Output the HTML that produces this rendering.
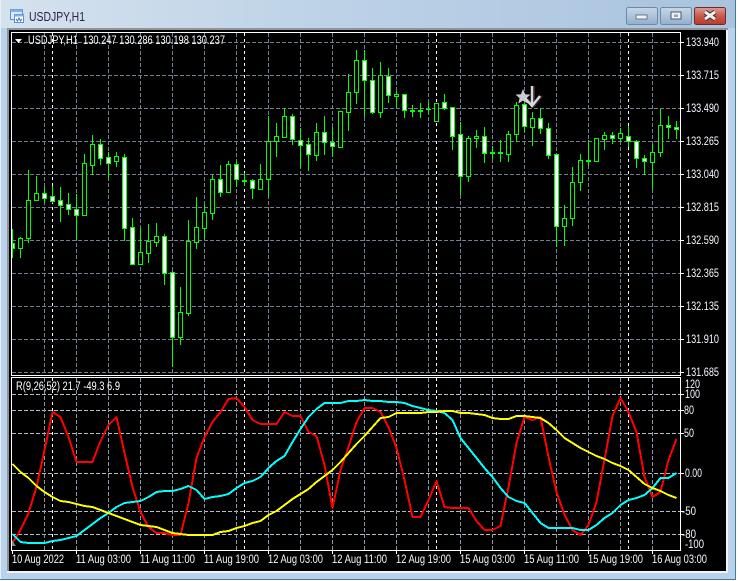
<!DOCTYPE html>
<html><head><meta charset="utf-8"><title>USDJPY,H1</title>
<style>
html,body{margin:0;padding:0;background:#fff;width:738px;height:581px;overflow:hidden}
svg{display:block}
text{font-family:"Liberation Sans",sans-serif}
</style></head><body>
<svg width="738" height="581" viewBox="0 0 738 581" xmlns="http://www.w3.org/2000/svg">
<defs>
<linearGradient id="tb" x1="0" y1="0" x2="1" y2="0"><stop offset="0" stop-color="#d5e2ee"/><stop offset=".45" stop-color="#bdd2e7"/><stop offset="1" stop-color="#a9c3de"/></linearGradient>
<linearGradient id="btn" x1="0" y1="0" x2="0" y2="1"><stop offset="0" stop-color="#c6d7e8"/><stop offset=".5" stop-color="#aec4da"/><stop offset="1" stop-color="#92aecb"/></linearGradient>
<linearGradient id="cl" x1="0" y1="0" x2="0" y2="1"><stop offset="0" stop-color="#d9a094"/><stop offset=".5" stop-color="#c65b4c"/><stop offset="1" stop-color="#b83a2c"/></linearGradient>
</defs>
<!-- window frame -->
<rect x="0" y="0" width="736" height="580" fill="#b9d1ea"/>
<rect x="0" y="0" width="736" height="28" fill="url(#tb)"/>
<rect x="0" y="0" width="1" height="580" fill="#e6eef6"/>
<path d="M735.5 0V579.5H0" fill="none" stroke="#3f7f8f" stroke-width="1"/>
<rect x="7" y="28" width="721" height="2" fill="#8e9499"/>
<rect x="7" y="28" width="2" height="544" fill="#8e9499"/>
<rect x="726" y="30" width="2" height="543" fill="#f2f5f8"/>
<rect x="7" y="571" width="721" height="2" fill="#f2f5f8"/>
<rect x="9" y="30" width="717" height="541" fill="#000"/>
<!-- title icon -->
<rect x="10.5" y="9.5" width="12" height="10" fill="#dceafa" stroke="#5d8fd0"/>
<rect x="10.5" y="9.5" width="12" height="2.5" fill="#7fb0ea"/>
<rect x="14.5" y="14.5" width="9" height="8" fill="#fff" stroke="#5d8fd0"/>
<rect x="14.5" y="14.5" width="9" height="2" fill="#7fb0ea"/>
<path d="M16 19l1.5 2 1.5-3 1.5 3 1.5-2" fill="none" stroke="#3b6fbd" stroke-width="1"/>
<text x="29" y="21" font-size="13" fill="#2d2245" textLength="56" lengthAdjust="spacingAndGlyphs">USDJPY,H1</text>
<!-- window buttons -->
<rect x="626.5" y="7.5" width="31" height="17" rx="2" fill="url(#btn)" stroke="#6f88a3"/>
<rect x="636" y="15" width="11" height="4" fill="#eef2f6" stroke="#55606c" stroke-width=".8"/>
<rect x="660.5" y="7.5" width="31" height="17" rx="2" fill="url(#btn)" stroke="#6f88a3"/>
<rect x="671" y="12" width="10" height="7" fill="#eef2f6" stroke="#4f5a66" stroke-width="1"/>
<rect x="674" y="14.5" width="4" height="2.5" fill="#8ea5bd"/>
<rect x="694.5" y="7.5" width="31" height="17" rx="2" fill="url(#cl)" stroke="#6d2a2a"/>
<path d="M705 12l10 7M715 12l-10 7" stroke="#3c2a2a" stroke-width="5" fill="none"/>
<path d="M705 12l10 7M715 12l-10 7" stroke="#eef0f2" stroke-width="3" fill="none"/>
<!-- grid -->
<g shape-rendering="crispEdges" fill="none" stroke-width="1">
<path stroke="#708090" stroke-dasharray="4 2" d="M12 42.5H680M12 75.5H680M12 108.5H680M12 141.5H680M12 174.5H680M12 207.5H680M12 240.5H680M12 273.5H680M12 306.5H680M12 339.5H680M12 372.5H680"/>
<path stroke="#b4bcc6" stroke-dasharray="4 2" d="M12 394.5H680M12 410.5H680M12 433.5H680M12 473.5H680M12 511.5H680M12 534.5H680"/>
<path stroke="#708090" stroke-dasharray="4 2" d="M44.5 33V375M76.5 33V375M108.5 33V375M140.5 33V375M172.5 33V375M204.5 33V375M236.5 33V375M268.5 33V375M300.5 33V375M332.5 33V375M364.5 33V375M396.5 33V375M428.5 33V375M460.5 33V375M492.5 33V375M524.5 33V375M556.5 33V375M588.5 33V375M620.5 33V375M652.5 33V375"/>
<path stroke="#8a97a6" stroke-dasharray="4 2" d="M44.5 378V550M76.5 378V550M108.5 378V550M140.5 378V550M172.5 378V550M204.5 378V550M236.5 378V550M268.5 378V550M300.5 378V550M332.5 378V550M364.5 378V550M396.5 378V550M428.5 378V550M460.5 378V550M492.5 378V550M524.5 378V550M556.5 378V550M588.5 378V550M620.5 378V550M652.5 378V550"/>
<path stroke="#fff" stroke-dasharray="3 3" d="M52.5 33V375M244.5 33V375M436.5 33V375M628.5 33V375M52.5 378V550M244.5 378V550M436.5 378V550M628.5 378V550"/>
</g>
<!-- candles -->
<g shape-rendering="crispEdges" stroke="#00ff00" stroke-width="1">
<path fill="none" d="M12.5 229V258M20.5 237V258M28.5 170V243M36.5 176V200M44.5 187V203M52.5 186V203M60.5 187V222M68.5 193V215M76.5 194V240M84.5 154V216M92.5 135V175M100.5 139V165M108.5 152V179M116.5 152V167M124.5 154V241M132.5 218V265M140.5 228V264M148.5 224V263M156.5 223V247M164.5 234V285M172.5 271V367M180.5 287V345M188.5 220V316M196.5 197V249M204.5 205V239M212.5 175V220M220.5 165V197M228.5 161V192M236.5 161V187M244.5 173V186M252.5 179V199M260.5 164V189M268.5 116V197M276.5 123V157M284.5 108V138M292.5 114V145M300.5 128V168M308.5 138V171M316.5 123V161M324.5 116V155M332.5 127V157M340.5 111V148M348.5 74V131M356.5 50V104M364.5 50V117M372.5 68V114M380.5 62V118M388.5 68V103M396.5 91V108M404.5 94V118M412.5 105V117M420.5 103V118M428.5 102V114M436.5 103V121M444.5 94V110M452.5 107V150M460.5 122V195M468.5 136V182M476.5 130V148M484.5 127V163M492.5 146V159M500.5 140V162M508.5 131V162M516.5 102V142M524.5 103V132M532.5 112V146M540.5 108V134M548.5 123V159M556.5 154V247M564.5 205V246M572.5 167V226M580.5 154V191M588.5 140V166M596.5 138V162M604.5 132V150M612.5 132V144M620.5 128V142M628.5 126V147M636.5 140V168M644.5 155V175M652.5 144V190M660.5 109V157M668.5 116V139M676.5 121V139"/>
<path fill="#000" d="M18.5 238.5h4v10h-4zM26.5 200.5h4v38h-4zM34.5 193.5h4v7h-4zM82.5 163.5h4v52h-4zM90.5 144.5h4v21h-4zM114.5 156.5h4v5h-4zM138.5 252.5h4v12h-4zM146.5 241.5h4v12h-4zM154.5 236.5h4v6h-4zM178.5 312.5h4v25h-4zM186.5 241.5h4v72h-4zM194.5 227.5h4v15h-4zM202.5 212.5h4v16h-4zM210.5 179.5h4v34h-4zM226.5 164.5h4v28h-4zM258.5 179.5h4v10h-4zM266.5 141.5h4v38h-4zM274.5 136.5h4v5h-4zM282.5 116.5h4v21h-4zM314.5 132.5h4v23h-4zM338.5 111.5h4v36h-4zM346.5 92.5h4v20h-4zM354.5 60.5h4v32h-4zM378.5 75.5h4v37h-4zM394.5 94.5h4v2h-4zM434.5 103.5h4v18h-4zM466.5 138.5h4v38h-4zM474.5 136.5h4v2h-4zM506.5 134.5h4v20h-4zM514.5 105.5h4v29h-4zM530.5 118.5h4v9h-4zM562.5 218.5h4v8h-4zM570.5 182.5h4v36h-4zM578.5 160.5h4v22h-4zM594.5 138.5h4v23h-4zM602.5 135.5h4v4h-4zM618.5 133.5h4v5h-4zM650.5 152.5h4v10h-4zM658.5 125.5h4v27h-4z"/>
<path fill="#fff" d="M12.5 243.5h2v5h-2zM42.5 193.5h4v5h-4zM50.5 196.5h4v5h-4zM58.5 200.5h4v5h-4zM66.5 204.5h4v5h-4zM74.5 209.5h4v6h-4zM98.5 144.5h4v14h-4zM106.5 157.5h4v6h-4zM122.5 157.5h4v71h-4zM130.5 227.5h4v37h-4zM162.5 236.5h4v37h-4zM170.5 272.5h4v65h-4zM218.5 179.5h4v13h-4zM234.5 164.5h4v15h-4zM250.5 180.5h4v8h-4zM290.5 116.5h4v23h-4zM298.5 140.5h4v5h-4zM306.5 144.5h4v10h-4zM322.5 132.5h4v10h-4zM330.5 142.5h4v4h-4zM362.5 60.5h4v20h-4zM370.5 80.5h4v32h-4zM386.5 76.5h4v19h-4zM402.5 94.5h4v16h-4zM442.5 102.5h4v6h-4zM450.5 107.5h4v29h-4zM458.5 134.5h4v42h-4zM482.5 136.5h4v17h-4zM522.5 104.5h4v22h-4zM538.5 118.5h4v10h-4zM546.5 128.5h4v27h-4zM554.5 154.5h4v72h-4zM610.5 135.5h4v3h-4zM626.5 136.5h4v5h-4zM634.5 141.5h4v17h-4zM642.5 158.5h4v3h-4zM666.5 125.5h4v2h-4zM674.5 127.5h4v2h-4z"/>
<path fill="#00ff00" stroke="none" d="M242 180h5v2h-5zM410 110h5v2h-5zM418 110h5v2h-5zM426 109h5v1h-5zM490 152h5v2h-5zM498 152h5v2h-5zM586 160h5v2h-5z"/>
</g>
<!-- frame lines -->
<g shape-rendering="crispEdges" fill="none" stroke="#fff" stroke-width="1">
<path d="M11.5 32.5H680.5V375.5H11.5Z"/>
<path d="M11.5 377.5H680.5V550.5H11.5Z"/>
<path d="M681 42.5h3M681 75.5h3M681 108.5h3M681 141.5h3M681 174.5h3M681 207.5h3M681 240.5h3M681 273.5h3M681 306.5h3M681 339.5h3M681 372.5h3M681 394.5h3M681 410.5h3M681 433.5h3M681 473.5h3M681 511.5h3M681 534.5h3"/>
<path d="M12.5 551v3M76.5 551v3M140.5 551v3M204.5 551v3M268.5 551v3M332.5 551v3M396.5 551v3M460.5 551v3M524.5 551v3M588.5 551v3M652.5 551v3"/>
</g>
<!-- indicator lines -->
<g fill="none" stroke-width="2" stroke-linejoin="round" shape-rendering="crispEdges">
<polyline stroke="#ff0000" points="12.5,543 20.5,530 28.5,513 36.5,487 44.5,450 52.5,412 60.5,417 68.5,437 76.5,462 84.5,462 92.5,462 100.5,441 108.5,425 116.5,417 124.5,453 132.5,487 140.5,512 148.5,527 156.5,533 164.5,533 172.5,535 180.5,535 188.5,503 196.5,458 204.5,437 212.5,422 220.5,412 228.5,399 236.5,398 244.5,407 252.5,420 260.5,424 268.5,424 276.5,424 284.5,412 292.5,416 300.5,416 308.5,432 316.5,436 324.5,465 332.5,508 340.5,470 348.5,447 356.5,422 364.5,408 372.5,408 380.5,412 388.5,427 396.5,448 404.5,480 412.5,517 420.5,517 428.5,500 436.5,481 444.5,507 452.5,508 460.5,508 468.5,508 476.5,521 484.5,530 492.5,530 500.5,526 508.5,487 516.5,443 524.5,417 532.5,420 540.5,417 548.5,457 556.5,492 564.5,515 572.5,530 580.5,535 588.5,525 596.5,502 604.5,460 612.5,416 620.5,398 628.5,412 636.5,432 644.5,477 652.5,497 660.5,492 668.5,460 676.5,439"/>
<polyline stroke="#00ffff" points="12.5,534 20.5,542 28.5,543 36.5,543 44.5,543 52.5,541 60.5,540 68.5,538 76.5,536 84.5,530 92.5,524 100.5,518 108.5,513 116.5,507 124.5,503 132.5,502 140.5,501 148.5,497 156.5,492 164.5,491 172.5,491 180.5,489 188.5,486 196.5,490 204.5,499 212.5,497 220.5,496 228.5,494 236.5,488 244.5,483 252.5,481 260.5,477 268.5,468 276.5,461 284.5,456 292.5,442 300.5,429 308.5,417 316.5,409 324.5,403 332.5,403 340.5,403 348.5,401 356.5,401 364.5,400 372.5,401 380.5,401 388.5,402 396.5,402 404.5,403 412.5,406 420.5,408 428.5,410 436.5,411 444.5,413 452.5,420 460.5,438 468.5,448 476.5,458 484.5,468 492.5,477 500.5,488 508.5,497 516.5,501 524.5,503 532.5,513 540.5,523 548.5,528 556.5,528 564.5,528 572.5,528 580.5,530 588.5,530 596.5,525 604.5,518 612.5,513 620.5,505 628.5,500 636.5,498 644.5,495 652.5,488 660.5,478 668.5,478 676.5,473"/>
<polyline stroke="#ffff00" points="12.5,464 20.5,472 28.5,478 36.5,486 44.5,492 52.5,497 60.5,501 68.5,502 76.5,504 84.5,506 92.5,507 100.5,510 108.5,513 116.5,516 124.5,519 132.5,522 140.5,525 148.5,526 156.5,527 164.5,530 172.5,533 180.5,534 188.5,535 196.5,535 204.5,535 212.5,535 220.5,532 228.5,531 236.5,528 244.5,526 252.5,523 260.5,521 268.5,515 276.5,511 284.5,505 292.5,499 300.5,494 308.5,489 316.5,482 324.5,476 332.5,470 340.5,462 348.5,453 356.5,444 364.5,436 372.5,427 380.5,418 388.5,417 396.5,413 404.5,413 412.5,413 420.5,413 428.5,412 436.5,412 444.5,411 452.5,411 460.5,413 468.5,413 476.5,414 484.5,415 492.5,418 500.5,419 508.5,419 516.5,416 524.5,416 532.5,417 540.5,418 548.5,423 556.5,430 564.5,438 572.5,443 580.5,448 588.5,452 596.5,456 604.5,459 612.5,463 620.5,466 628.5,470 636.5,477 644.5,484 652.5,488 660.5,491 668.5,495 676.5,498"/>
</g>
<path d="M12 540l4 6h-4z" fill="#808080"/>
<!-- markers -->
<path d="M523 89l2.1 5.2 5.4.4-4.1 3.5 1.3 5.4-4.7-2.9-4.7 2.9 1.3-5.4-4.1-3.5 5.4-.4z" fill="#c8ccd2"/>
<path d="M533 86V105M526 98l7 8 8-10" fill="none" stroke="#402030" stroke-width="2.4" transform="translate(.8 0)"/>
<path d="M532 86V105M525 98l7 8 8-10" fill="none" stroke="#d6dade" stroke-width="2.4"/>
<!-- labels -->
<path d="M15 39h7l-3.5 4z" fill="#fff"/>
<g fill="#fff" font-size="11.5">
<text x="28" y="44" textLength="197" lengthAdjust="spacingAndGlyphs" xml:space="preserve">USDJPY,H1  130.247 130.286 130.198 130.237</text>
<text x="16" y="390" textLength="104" lengthAdjust="spacingAndGlyphs">R(9,26,52) 21.7 -49.3 6.9</text>
</g>
<g fill="#f4f8ff" font-size="11.5">
<text x="686" y="46" textLength="33" lengthAdjust="spacingAndGlyphs">133.940</text>
<text x="686" y="79" textLength="33" lengthAdjust="spacingAndGlyphs">133.715</text>
<text x="686" y="112" textLength="33" lengthAdjust="spacingAndGlyphs">133.490</text>
<text x="686" y="145" textLength="33" lengthAdjust="spacingAndGlyphs">133.265</text>
<text x="686" y="178" textLength="33" lengthAdjust="spacingAndGlyphs">133.040</text>
<text x="686" y="211" textLength="33" lengthAdjust="spacingAndGlyphs">132.815</text>
<text x="686" y="244" textLength="33" lengthAdjust="spacingAndGlyphs">132.590</text>
<text x="686" y="277" textLength="33" lengthAdjust="spacingAndGlyphs">132.365</text>
<text x="686" y="310" textLength="33" lengthAdjust="spacingAndGlyphs">132.135</text>
<text x="686" y="343" textLength="33" lengthAdjust="spacingAndGlyphs">131.910</text>
<text x="686" y="376" textLength="33" lengthAdjust="spacingAndGlyphs">131.685</text>
<text x="685" y="388" textLength="15" lengthAdjust="spacingAndGlyphs">120</text>
<text x="685" y="398" textLength="15" lengthAdjust="spacingAndGlyphs">100</text>
<text x="684" y="414" textLength="10" lengthAdjust="spacingAndGlyphs">80</text>
<text x="684" y="437" textLength="10" lengthAdjust="spacingAndGlyphs">50</text>
<text x="685" y="477" textLength="17" lengthAdjust="spacingAndGlyphs">0.00</text>
<text x="682" y="515" textLength="14" lengthAdjust="spacingAndGlyphs">-50</text>
<text x="682" y="538" textLength="14" lengthAdjust="spacingAndGlyphs">-80</text>
<text x="685" y="548" textLength="19" lengthAdjust="spacingAndGlyphs">-100</text>
<text x="12" y="563" textLength="52" lengthAdjust="spacingAndGlyphs">10 Aug 2022</text>
<text x="76" y="563" textLength="55" lengthAdjust="spacingAndGlyphs">11 Aug 03:00</text>
<text x="140" y="563" textLength="55" lengthAdjust="spacingAndGlyphs">11 Aug 11:00</text>
<text x="204" y="563" textLength="55" lengthAdjust="spacingAndGlyphs">11 Aug 19:00</text>
<text x="268" y="563" textLength="55" lengthAdjust="spacingAndGlyphs">12 Aug 03:00</text>
<text x="332" y="563" textLength="55" lengthAdjust="spacingAndGlyphs">12 Aug 11:00</text>
<text x="396" y="563" textLength="55" lengthAdjust="spacingAndGlyphs">12 Aug 19:00</text>
<text x="460" y="563" textLength="55" lengthAdjust="spacingAndGlyphs">15 Aug 03:00</text>
<text x="524" y="563" textLength="55" lengthAdjust="spacingAndGlyphs">15 Aug 11:00</text>
<text x="588" y="563" textLength="55" lengthAdjust="spacingAndGlyphs">15 Aug 19:00</text>
<text x="652" y="563" textLength="55" lengthAdjust="spacingAndGlyphs">16 Aug 03:00</text>
</g>
</svg>
</body></html>
